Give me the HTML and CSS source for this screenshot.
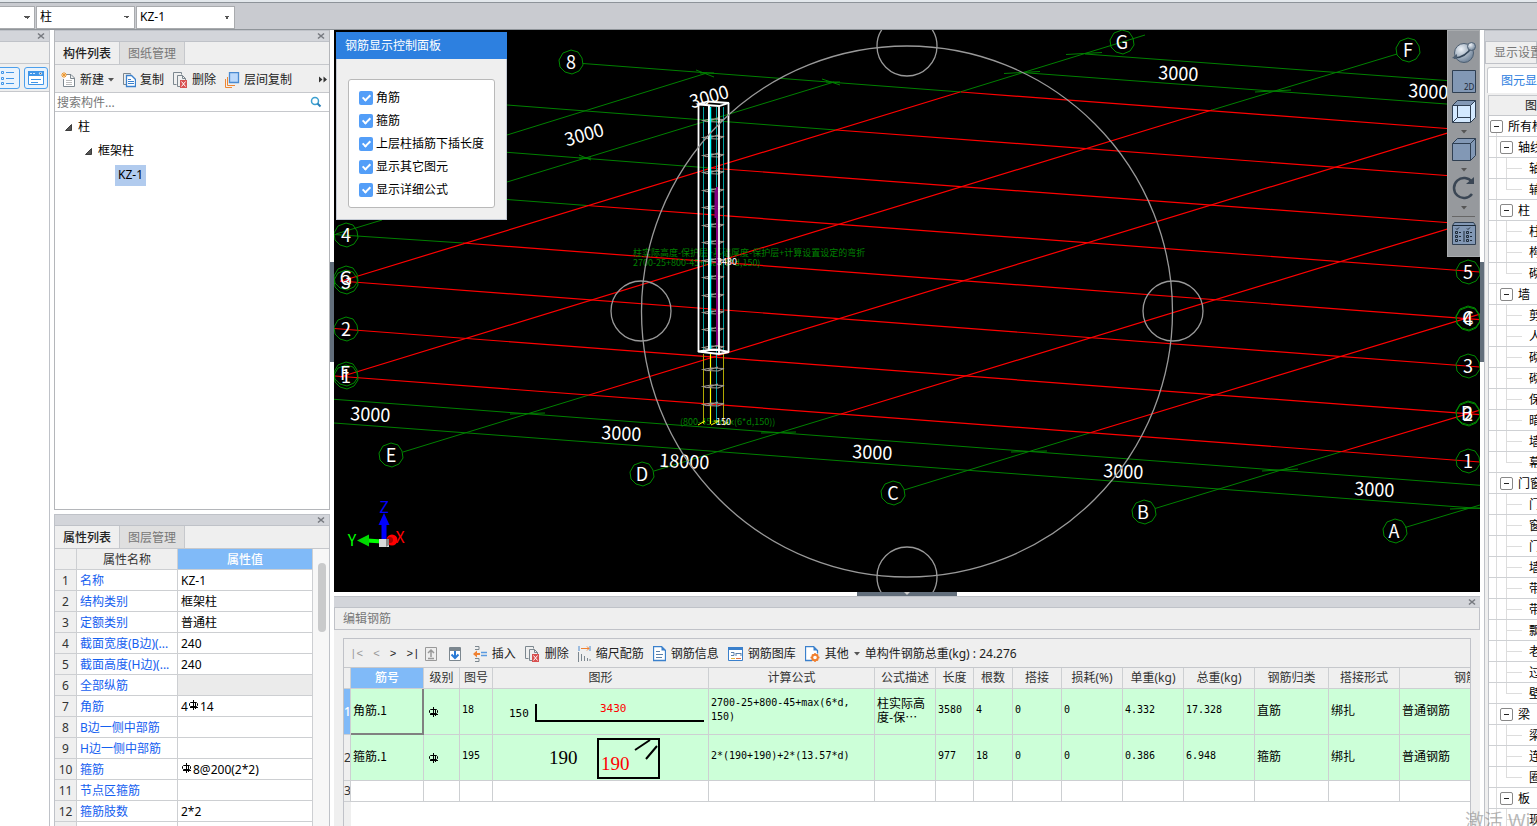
FILE: index.html
```html
<!DOCTYPE html>
<html lang="zh-CN">
<head>
<meta charset="utf-8">
<title>钢筋三维</title>
<link rel="stylesheet" href="styles.css">
</head>
<body>
<svg class="defs" aria-hidden="true">
  <symbol id="close" viewBox="0 0 8 8"><path d="M1 1.5l6 5M7 1.5l-6 5" stroke="#777a80" stroke-width="1.6" fill="none"/></symbol>
  <symbol id="down" viewBox="0 0 6 4"><path d="M0 0h6l-3 3.5z" fill="#555"/></symbol>
  <symbol id="rebar" viewBox="0 0 10 10"><path d="M1.500 2.500h6l1 1v2l-1 1h-6l-1-1v-2zM4.500 0v10M6.500 2v7M1 7.500h8" fill="none" stroke="#000"/></symbol>
  <symbol id="open" viewBox="0 0 7 7"><path d="M6.500 .5v6h-6z" fill="#555" stroke="#222" stroke-width=".8"/></symbol>
  <symbol id="del" viewBox="0 0 15 16"><path d="M3.500 12.500h-3v-12h8v2M7 14.500H4.500v-11h5l3 3v2M9.500 3.500v3h3" fill="none" stroke="#7c878f"/><path d="M7 8h7v8H7z" fill="#d85050"/><path d="M8.500 9.500l4 5M12.500 9.500l-4 5" stroke="#fff"/></symbol>
  <symbol id="bub" viewBox="-13 -13 26 26"><path d="M0-12L7-10 11-4 12 3 8 9 1 12-6 10-11 5-12-2-8-9z" fill="none" stroke="#008a00"/></symbol>
</svg>

<header class="topbar">
  <select class="combo combo-first" aria-label="楼层"><option></option></select>
  <select class="combo" aria-label="构件类别"><option>柱</option></select>
  <select class="combo" aria-label="构件"><option>KZ-1</option></select>
</header>

<main class="work">
  <aside class="nav">
    <div class="strip"><button class="x" aria-label="关闭"><svg width="8" height="8"><use href="#close"/></svg></button></div>
    <div class="nav-blank"></div>
    <div class="nav-tools">
      <button class="tile" aria-label="列表"><svg width="22" height="20" viewBox="0 0 22 20"><g fill="none" stroke="#3f95e8"><path d="M4.500 3.500h2v2h-2zM4.500 9.500h2v2h-2zM4.500 14.500h2v2h-2zM9 4.500h8M9 10.500h8M9 15.500h8"/></g></svg></button>
      <button class="tile" aria-label="窗口"><svg width="22" height="20" viewBox="0 0 22 20"><path d="M3.500 3.500h15v13h-15z" fill="#fff" stroke="#3f95e8"/><path d="M3 3h16v5H3z" fill="#3f95e8"/><path d="M5 5.500h2M8 5.500h2M14 5h3l-1.500 2z" stroke="#fff" stroke-width=".8"/><path d="M6 11.500h10M6 14.500h7" stroke="#3f95e8"/></svg></button>
    </div>
  </aside>

  <div class="side">
    <section class="dock list-dock">
      <div class="strip"><button class="x" aria-label="关闭"><svg width="8" height="8"><use href="#close"/></svg></button></div>
      <div class="tabs"><button class="tab on">构件列表</button><button class="tab">图纸管理</button></div>
      <div class="tools">
        <button><svg width="15" height="16" viewBox="0 0 15 16"><path d="M5 2.500h5l3.500 3.500v8.500h-11V7M9.500 2.500v4h4" fill="#fff" stroke="#7c878f"/><path d="M5 8.500h6M5 10.500h6M5 12.500h6" stroke="#bbb"/><path d="M0 3h6M3 0v6M1 1l4 4M5 1L1 5" stroke="#f0982c"/></svg>新建<svg class="arr" width="6" height="4"><use href="#down"/></svg></button>
        <button><svg width="13" height="16" viewBox="0 0 13 16"><path d="M3 12.500H.5V1.500h7v1" fill="none" stroke="#7c878f"/><path d="M3.500 3.500h5l4 4v7h-9z" fill="#fff" stroke="#3a80cc" stroke-width="1.300"/><path d="M5 7.500h3M5 9.500h6M5 11.500h6" stroke="#3a80cc"/></svg>复制</button>
        <button><svg width="15" height="16"><use href="#del"/></svg>删除</button>
        <button><svg width="15" height="16" viewBox="0 0 15 16"><path d="M.5 7v8.500H7M2.500 5v8.500H10" fill="none" stroke="#ed8734"/><path d="M4.500.5h9v10h-9z" fill="#bcd9fb" stroke="#4a8ad0" stroke-width="1.300"/></svg>层间复制</button>
        <button class="more" aria-label="更多"><svg width="8" height="7" viewBox="0 0 8 7"><path d="M0 .5l3.500 3L0 6.500zM4.500.5L8 3.500l-3.500 3z" fill="#333"/></svg></button>
      </div>
      <label class="search"><input type="text" placeholder="搜索构件..." aria-label="搜索构件"><svg width="12" height="12" viewBox="0 0 12 12"><circle cx="5" cy="5" r="3.500" fill="#fff" stroke="#3b9fd0" stroke-width="1.500"/><path d="M7.500 7.500l3 3" stroke="#2a7fb8" stroke-width="2"/></svg></label>
      <ul class="tree">
        <li><svg width="7" height="7"><use href="#open"/></svg>柱</li>
        <li class="lv2"><svg width="7" height="7"><use href="#open"/></svg>框架柱</li>
        <li class="lv3"><span class="picked">KZ-1</span></li>
      </ul>
    </section>

    <section class="dock prop-dock">
      <div class="strip"><button class="x" aria-label="关闭"><svg width="8" height="8"><use href="#close"/></svg></button></div>
      <div class="tabs"><button class="tab on">属性列表</button><button class="tab">图层管理</button></div>
      <div class="prop-body">
        <table class="props">
          <colgroup><col class="p0"><col class="p1"><col></colgroup>
          <tr><th></th><th>属性名称</th><th class="hot">属性值</th></tr>
          <tr><th>1</th><td>名称</td><td>KZ-1</td></tr>
          <tr><th>2</th><td>结构类别</td><td>框架柱</td></tr>
          <tr><th>3</th><td>定额类别</td><td>普通柱</td></tr>
          <tr><th>4</th><td>截面宽度(B边)(...</td><td>240</td></tr>
          <tr><th>5</th><td>截面高度(H边)(...</td><td>240</td></tr>
          <tr><th>6</th><td>全部纵筋</td><td class="off"></td></tr>
          <tr><th>7</th><td>角筋</td><td>4<svg class="rb" width="12" height="10"><use href="#rebar"/></svg>14</td></tr>
          <tr><th>8</th><td>B边一侧中部筋</td><td></td></tr>
          <tr><th>9</th><td>H边一侧中部筋</td><td></td></tr>
          <tr><th>10</th><td>箍筋</td><td><svg class="rb" width="12" height="10"><use href="#rebar"/></svg>8@200(2*2)</td></tr>
          <tr><th>11</th><td>节点区箍筋</td><td></td></tr>
          <tr><th>12</th><td>箍筋肢数</td><td>2*2</td></tr>
          <tr><th></th><td></td><td></td></tr>
        </table>
        <div class="scroll"><div class="thumb"></div></div>
      </div>
    </section>
  </div>

  <div class="splitter v"></div>

  <div class="center">
    <section class="view">
      <svg class="scene" viewBox="334 30 1146 562" preserveAspectRatio="xMinYMin slice">
        <g fill="none" stroke="#008000">
          <path d="M334 234.500L463 243M507 199.500L587 205.500M507 152.300L710 168M507 105L836 130M583 63.500L961 92M1022 72.500L1480 106.500M1085 54L1480 83M334 399.300L1480 485.300M334 423L1480 508.500"/>
          <path d="M403 452L589 395M654 471L841 414M904 490L1091 432.500M1155 508.500L1342 451.500M1405 527.500L1480 505M336 234L382 220M507 182L834 82M507 135L707 73M960 92L1145 35M1212 110L1397 54"/>
          <path d="M510 414l35-1M761 433l35-1M1011 452l36-1M1262 471l36-2M1450 509l30-1M1004 73.500l36-2M1066 54.500l36-2M1255 92l36-2M696 70l18 7M700 73h14M822 79l18 6M826 82h14M579 155l12 5M579 158h12"/>
        </g>
        <g fill="none" stroke="#f00" stroke-width="1.200">
          <path d="M335 376L1480 462M334 328.500L1480 414.700M340 281L1480 367M463 243L1480 319.700M587 205.500L1480 272M710 168L1480 225M836 130L1480 178M961 92L1480 131"/>
          <path d="M340 377L1212 110M340 281.500L960 92M589 395L1480 123M841 414L1480 219M1091 432.500L1480 314M1342 451.500L1480 410"/>
        </g>
        <g class="ax">
          <use href="#bub" x="558" y="49" width="26" height="26"/><text x="571" y="69">8</text>
          <use href="#bub" x="1109" y="29" width="26" height="26"/><text x="1122" y="49">G</text>
          <use href="#bub" x="1395" y="37" width="26" height="26"/><text x="1408" y="57">F</text>
          <use href="#bub" x="333" y="222" width="26" height="26"/><text x="346" y="242">4</text>
          <use href="#bub" x="333" y="265" width="26" height="26"/><use href="#bub" x="333" y="269" width="26" height="26"/><text x="346" y="285">G</text><text x="346" y="289">3</text>
          <use href="#bub" x="333" y="316" width="26" height="26"/><text x="346" y="336">2</text>
          <use href="#bub" x="333" y="361" width="26" height="26"/><use href="#bub" x="333" y="364" width="26" height="26"/><text x="345" y="380">F</text><text x="346" y="383">1</text>
          <use href="#bub" x="378" y="442" width="26" height="26"/><text x="391" y="462">E</text>
          <use href="#bub" x="629" y="461" width="26" height="26"/><text x="642" y="481">D</text>
          <use href="#bub" x="880" y="480" width="26" height="26"/><text x="893" y="500">C</text>
          <use href="#bub" x="1131" y="499" width="26" height="26"/><text x="1143" y="519">B</text>
          <use href="#bub" x="1382" y="518" width="26" height="26"/><text x="1394" y="538">A</text>
          <use href="#bub" x="1455" y="259" width="26" height="26"/><text x="1468" y="279">5</text>
          <use href="#bub" x="1455" y="305" width="26" height="26"/><use href="#bub" x="1455" y="306" width="26" height="26"/><text x="1468" y="325">C</text><text x="1468" y="326">4</text>
          <use href="#bub" x="1455" y="353" width="26" height="26"/><text x="1468" y="373">3</text>
          <use href="#bub" x="1455" y="400" width="26" height="26"/><use href="#bub" x="1455" y="401" width="26" height="26"/><text x="1467" y="420">B</text><text x="1468" y="421">2</text>
          <use href="#bub" x="1455" y="448" width="26" height="26"/><text x="1468" y="468">1</text>
        </g>
        <g class="dim">
          <text transform="translate(370 421) rotate(3)">3000</text>
          <text transform="translate(621 440) rotate(3)">3000</text>
          <text transform="translate(872 459) rotate(3)">3000</text>
          <text transform="translate(1123 478) rotate(3)">3000</text>
          <text transform="translate(1374 496) rotate(3)">3000</text>
          <text transform="translate(684 468) rotate(3)">18000</text>
          <text transform="translate(1178 80) rotate(3)">3000</text>
          <text transform="translate(1428 98) rotate(3)">3000</text>
          <text transform="translate(586 141) rotate(-16)">3000</text>
          <text transform="translate(711 103) rotate(-16)">3000</text>
        </g>
        <g class="note">
          <text x="633" y="256">柱实际高度-保护层+基础厚度-保护层+计算设置设定的弯折</text>
          <text x="633" y="266">2700-25+800-45+max(6*d,150)</text>
          <text x="680" y="425">(800-45+max(6*d,150))</text>
        </g>
        <path d="M703.500 107V350M723.500 107V350M716.500 107V424" stroke="#00a5a5" fill="none"/>
        <path d="M703.500 354V424M723.500 354V424" stroke="#b0a800" fill="none"/>
        <path d="M710.500 354V424" stroke="#ff0" stroke-width="1.200"/>
        <path d="M698 425l7-4M711 425l8-4h-5M724 425l4-3" stroke="#ff0" fill="none"/>
        <g fill="none" stroke="#a09a90" stroke-width="1.200">
          <path id="tie" d="M703 120.500l8-1.500 13 .5-6 2.500-12-.5zM706 122l12-4"/>
          <use href="#tie" y="17"/><use href="#tie" y="35"/><use href="#tie" y="52"/><use href="#tie" y="70"/><use href="#tie" y="87"/><use href="#tie" y="105"/><use href="#tie" y="122"/><use href="#tie" y="140"/><use href="#tie" y="157"/><use href="#tie" y="175"/><use href="#tie" y="192"/><use href="#tie" y="209"/><use href="#tie" y="227"/><use href="#tie" y="249"/><use href="#tie" y="266"/><use href="#tie" y="284"/>
        </g>
        <path d="M709 105V350" stroke="#fff" stroke-width="2"/>
        <path d="M710.500 107V350" stroke="#0ff" stroke-width="1.500"/>
        <path d="M717 187V345M715.500 190v28" stroke="#800080" stroke-width="2"/>
        <path d="M698.500 104V352M728.500 103V352M719 106V353" stroke="#fff" stroke-width="1.800"/>
        <path d="M698 104l10-2.500 21 1.500-10 3-20-1.500zM698 351.500l21 2.500 10-2-10-2h-10z" fill="none" stroke="#fff" stroke-width="1.800"/>
        <g class="val"><text x="717" y="265">3430</text><text x="716" y="425">150</text></g>
        <g fill="none" stroke="#999" stroke-width="1.300">
          <circle cx="907" cy="311.500" r="265.500"/><circle cx="907" cy="46" r="30"/><circle cx="907" cy="577" r="30"/><circle cx="641" cy="311" r="30"/><circle cx="1173" cy="311" r="30"/>
        </g>
        <path d="M384 539v-15" stroke="#00f" stroke-width="5"/><path d="M384 513l5.500 12h-11z" fill="#00f"/>
        <path d="M382 541.500l-15-1" stroke="#0f0" stroke-width="4"/><path d="M357 540.500l12-6v12z" fill="#00d800"/>
        <circle cx="392" cy="540" r="5.500" fill="#f00"/><circle cx="390" cy="540" r="3" fill="#a00"/>
        <path d="M379 539h10v8h-10z" fill="#d8d8d8"/><path d="M386 539h3v6l-3 2z" fill="#888"/>
        <g class="xyz"><text x="384" y="513" fill="#00f">Z</text><text x="352" y="546" fill="#0f0">Y</text><text x="400" y="543" fill="#f00">X</text></g>
      </svg>

      <div class="panel">
        <h2>钢筋显示控制面板</h2>
        <div class="checks">
          <label><input type="checkbox" checked>角筋</label>
          <label><input type="checkbox" checked>箍筋</label>
          <label><input type="checkbox" checked>上层柱插筋下插长度</label>
          <label><input type="checkbox" checked>显示其它图元</label>
          <label><input type="checkbox" checked>显示详细公式</label>
        </div>
      </div>

      <div class="viewbar">
        <button aria-label="动态观察"><svg width="26" height="24" viewBox="0 0 26 24"><defs><radialGradient id="ball" cx=".35" cy=".3" r=".8"><stop offset="0" stop-color="#eef3f8"/><stop offset="1" stop-color="#63788f"/></radialGradient></defs><circle cx="13" cy="13" r="9.500" fill="url(#ball)" stroke="#4d5f72"/><path d="M3 18Q14 18 21 7" fill="none" stroke="#35475a" stroke-width="1.500"/><circle cx="20.500" cy="6.500" r="4" fill="url(#ball)" stroke="#4d5f72"/><path d="M1 18l5-4v5z" fill="#4d5f72"/></svg></button>
        <button aria-label="二维"><svg width="24" height="24" viewBox="0 0 24 24"><path d="M.5.500h23v22H.5z" fill="#8298b5" stroke="#2f3f52"/><text x="12" y="20" font-size="8" fill="#1d2a38">2D</text></svg></button>
        <button aria-label="线框"><svg width="24" height="24" viewBox="0 0 24 24"><path d="M.5 5.500h18v17H.5z" fill="#d3e9ff"/><path d="M.5 5.500l5-5h18l-5 5z" fill="#8298b5"/><path d="M18.500 5.500l5-5v17l-5 5z" fill="#d3e9ff"/><path d="M.5 5.500h18v17H.5zM.5 5.500l5-5h18l-5 5M23.500.5v17l-5 5M5.500 5.500v12h13M5.500 17.500l-5 5" fill="none" stroke="#2f3f52"/></svg></button>
        <svg class="dd" width="6" height="4"><use href="#down"/></svg>
        <button aria-label="实体"><svg width="24" height="24" viewBox="0 0 24 24"><path d="M.5 5.500l5-5h18v17l-5 5H.5z" fill="#8298b5" stroke="#2f3f52"/><path d="M.5 5.500h18v17M18.500 5.500l5-5" fill="none" stroke="#2f3f52"/></svg></button>
        <svg class="dd" width="6" height="4"><use href="#down"/></svg>
        <button aria-label="旋转"><svg width="24" height="24" viewBox="0 0 24 24"><path d="M20 18a10 10 0 1 1 0-12" fill="none" stroke="#3a4654" stroke-width="2.500"/><path d="M22 1v7h-8z" fill="#3a4654"/></svg></button>
        <svg class="dd" width="6" height="4"><use href="#down"/></svg>
        <hr>
        <button aria-label="显示面板"><svg width="24" height="24" viewBox="0 0 24 24"><path d="M.5 3.500l2-3h19l2 3v19H.5z" fill="#8298b5" stroke="#2f3f52"/><path d="M.5 3.500h23M12 9v11M4 6.500l1 1 2-2M15 6.500l1 1 2-2M3.500 9.500h2v2h-2zM3.500 13.500h2v2h-2zM3.500 17.500h2v2h-2zM14.500 9.500h2v2h-2zM14.500 13.500h2v2h-2zM14.500 17.500h2v2h-2zM7 10.500h2M7 14.500h2M7 18.500h2M18 10.500h2M18 14.500h2M18 18.500h2" fill="none" stroke="#1d2a38"/></svg></button>
      </div>
    </section>

    <div class="splitter h"><span><svg width="6" height="4" viewBox="0 0 6 4"><path d="M0 0h6l-3 3z" fill="#ccc"/></svg></span></div>

    <section class="dock edit">
      <div class="strip"><button class="x" aria-label="关闭"><svg width="8" height="8"><use href="#close"/></svg></button></div>
      <h2 class="edit-title">编辑钢筋</h2>
      <div class="frame">
        <div class="edit-tools">
          <div class="steps"><button disabled>|&lt;</button><button disabled>&lt;</button><button>&gt;</button><button>&gt;|</button></div>
          <button aria-label="上移"><svg width="12" height="14" viewBox="0 0 12 14"><path d="M.5.500h11v13H.5z" fill="#eee" stroke="#999"/><path d="M6 10V3M3 6l3-3 3 3M3 11.500h6" fill="none" stroke="#999" stroke-width="1.500"/></svg></button>
          <button class="godown" aria-label="下移"><svg width="12" height="14" viewBox="0 0 12 14"><path d="M.5.500h11v13H.5z" fill="#fff" stroke="#7c878f"/><path d="M0 1h12v3H0z" fill="#7c878f"/><path d="M6 4v7M2.500 7.500L6 11l3.500-3.500" fill="none" stroke="#2b7bd6" stroke-width="2"/></svg></button>
          <button><svg width="14" height="16" viewBox="0 0 14 16"><path d="M2 .5h4v3H2M2 15.500h4v-3H2" fill="none" stroke="#7c878f"/><path d="M0 8l4-3.500v2.500h3v2H4v2.500z" fill="#f08030"/><path d="M8 6.500h6M8 9.500h6" stroke="#5a9ae0" stroke-width="1.500"/></svg>插入</button>
          <button><svg width="15" height="16"><use href="#del"/></svg>删除</button>
          <button><svg width="13" height="16" viewBox="0 0 13 16"><path d="M1 0v5M12 0v5" stroke="#4a8ad0"/><path d="M3 2.500h8M9 .5l2 2-2 2" fill="none" stroke="#f08030"/><path d="M.5 6v10M3.500 8v7M6.500 10v5M9.500 12v3M12 13v2" stroke="#7c878f"/></svg>缩尺配筋</button>
          <button><svg width="13" height="16" viewBox="0 0 13 16"><path d="M.5.500h8l4 4v10H.5z" fill="#fff" stroke="#3a80cc" stroke-width="1.300"/><path d="M8.500.5v4h4z" fill="#3a80cc"/><path d="M3 5.500h4M3 8.500h7M3 11.500h6" stroke="#5a7fa8"/></svg>钢筋信息</button>
          <button><svg width="15" height="14" viewBox="0 0 15 14"><path d="M.5.500h14v13H.5z" fill="#fff" stroke="#3a80cc"/><path d="M0 0h15v3H0z" fill="#3a80cc"/><path d="M3 5.500h3v3H3M8 6.500h5M8 6v3M13 6v3" fill="none" stroke="#5a7fa8"/><path d="M3 11.500h4" stroke="#e5b53a"/><path d="M8 11.500h5" stroke="#e07048"/></svg>钢筋图库</button>
          <button><svg width="15" height="16" viewBox="0 0 15 16"><path d="M7 14.500H.5V.5h8l4 4v3" fill="#fff" stroke="#3a80cc" stroke-width="1.300"/><path d="M8.500.5v4h4z" fill="#3a80cc"/><circle cx="10" cy="11.500" r="2.800" fill="#fff" stroke="#f08030" stroke-width="2"/><path d="M10 7v2M10 14v2M5.500 11.500h2M12.500 11.500h2M7 8.500l1 1M13 8.500l-1 1M7 14.500l1-1M13 14.500l-1-1" stroke="#f08030" stroke-width="1.500"/></svg>其他<svg class="arr" width="6" height="4"><use href="#down"/></svg></button>
          <span class="total">单构件钢筋总重(kg) : 24.276</span>
        </div>
        <div class="grid-wrap">
          <table class="bars">
            <colgroup><col class="w7"><col class="w73"><col class="w36"><col class="w33"><col class="w216"><col class="w166"><col class="w61"><col class="w38"><col class="w39"><col class="w49"><col class="w61"><col class="w61"><col class="w71"><col class="w74"><col class="w71"><col class="w157"></colgroup>
            <tr><th></th><th class="hot">筋号</th><th>级别</th><th>图号</th><th>图形</th><th>计算公式</th><th>公式描述</th><th>长度</th><th>根数</th><th>搭接</th><th>损耗(%)</th><th>单重(kg)</th><th>总重(kg)</th><th>钢筋归类</th><th>搭接形式</th><th>钢筋类型</th></tr>
            <tr class="row"><th class="hot">1</th><td class="zh cur">角筋.1</td><td class="sym"><svg width="10" height="10"><use href="#rebar"/></svg></td><td>18</td>
              <td class="fig"><svg width="215" height="45" viewBox="0 0 215 45"><path d="M43 15v17h168" fill="none" stroke="#000" stroke-width="2"/><text x="16" y="28">150</text><text x="107" y="23" class="red">3430</text></svg></td>
              <td>2700-25+800-45+max(6*d,<br>150)</td><td class="zh">柱实际高<br>度-保⋯</td><td>3580</td><td>4</td><td>0</td><td>0</td><td>4.332</td><td>17.328</td><td class="zh">直筋</td><td class="zh">绑扎</td><td class="zh">普通钢筋</td></tr>
            <tr class="row"><th>2</th><td class="zh">箍筋.1</td><td class="sym"><svg width="10" height="10"><use href="#rebar"/></svg></td><td>195</td>
              <td class="fig"><svg width="215" height="45" viewBox="0 0 215 45"><path d="M105 4h61v39h-61z" fill="none" stroke="#000" stroke-width="2"/><path d="M142 15l15-10M153 24l11-13" stroke="#000" stroke-width="2"/><text x="56" y="29" class="big">190</text><text x="108" y="35" class="big red">190</text></svg></td>
              <td>2*(190+190)+2*(13.57*d)</td><td></td><td>977</td><td>18</td><td>0</td><td>0</td><td>0.386</td><td>6.948</td><td class="zh">箍筋</td><td class="zh">绑扎</td><td class="zh">普通钢筋</td></tr>
            <tr><th>3</th><td></td><td></td><td></td><td></td><td></td><td></td><td></td><td></td><td></td><td></td><td></td><td></td><td></td><td></td><td></td></tr>
          </table>
        </div>
      </div>
    </section>
  </div>

  <div class="splitter v"></div>

  <aside class="dock display">
    <div class="strip"></div>
    <h2 class="edit-title">显示设置</h2>
    <div class="disp-tabs"><button>图元显示</button></div>
    <div class="disp-head">图层</div>
    <ul class="layers">
      <li class="root"><button class="box" aria-label="收起"></button>所有构件</li>
      <li class="grp"><button class="box" aria-label="收起"></button>轴线</li><li>轴网</li><li class="end">辅助轴线</li>
      <li class="grp"><button class="box" aria-label="收起"></button>柱</li><li>柱</li><li>构造柱</li><li class="end">砌体柱</li>
      <li class="grp"><button class="box" aria-label="收起"></button>墙</li><li>剪力墙</li><li>人防门框墙</li><li>砌体墙</li><li>砌体加筋</li><li>保温墙</li><li>暗梁</li><li>墙垛</li><li class="end">幕墙</li>
      <li class="grp"><button class="box" aria-label="收起"></button>门窗洞</li><li>门</li><li>窗</li><li>门联窗</li><li>墙洞</li><li>带形窗</li><li>带形洞</li><li>飘窗</li><li>老虎窗</li><li>过梁</li><li class="end">壁龛</li>
      <li class="grp"><button class="box" aria-label="收起"></button>梁</li><li>梁</li><li>连梁</li><li class="end">圈梁</li>
      <li class="grp"><button class="box" aria-label="收起"></button>板</li><li>现浇板</li>
    </ul>
  </aside>
</main>
<div class="watermark">激活 Windows</div>
</body>
</html>
```
FILE: styles.css
```css
* { box-sizing: border-box; }
body {
  margin: 0;
  height: 100vh;
  display: flex;
  flex-direction: column;
  overflow: hidden;
  background: #fff;
  color: #222;
  font: 12px/16px "Noto Sans", "Noto Sans CJK SC", sans-serif;
}
button, input, select { font: inherit; color: inherit; }
button { border: 0; background: none; padding: 0; }
h2 { margin: 0; font-size: 12px; font-weight: 400; }
ul { margin: 0; padding: 0; list-style: none; }
svg { flex: none; }
.defs { position: absolute; width: 0; height: 0; }

.topbar {
  flex: none;
  height: 30px;
  display: flex;
  align-items: center;
  gap: 1px;
  padding-top: 3px;
  background: #c9cbd0;
  border-top: 2px solid #e3e8ec;
  border-bottom: 1px solid #90959a;
  box-shadow: inset 0 1px #8d9399;
}
.combo {
  appearance: none;
  width: 99px;
  height: 23px;
  padding: 0 3px;
  border: 1px solid #a9abae;
  border-radius: 0;
  color: #000;
  background-color: #fff;
  background-image: linear-gradient(to top right, transparent 50%, #555 50%), linear-gradient(to top left, transparent 50%, #555 50%);
  background-position: right 7px top 9px, right 4px top 9px;
  background-size: 3px 3px;
  background-repeat: no-repeat;
}
.combo-first { width: 35px; border-left: 0; }

.work { flex: 1; min-height: 0; display: flex; }
.strip {
  flex: none;
  height: 12px;
  display: flex;
  justify-content: flex-end;
  align-items: center;
  padding-right: 4px;
  background: #d3d5da;
  border-top: 1px solid #bfc2c8;
  border-bottom: 1px solid #bfc2c8;
}
.x { display: flex; }
.nav { flex: 0 0 50px; min-width: 0; overflow: hidden; border-right: 1px solid #bfc2c8; margin-right: 4px; }
.nav-blank { height: 22px; background: #efefef; border-bottom: 1px solid #c6c8cc; }
.nav-tools {
  height: 28px;
  display: flex;
  justify-content: flex-end;
  align-items: center;
  gap: 4px;
  padding-right: 1px;
  background: #efefef;
  border-bottom: 1px solid #c6c8cc;
}
.tile {
  flex: none;
  width: 24px;
  height: 22px;
  display: flex;
  align-items: center;
  justify-content: center;
  border: 1px solid #4c9fec;
  border-radius: 3px;
  background: #e9f3fd;
}

.side { flex: 0 0 276px; display: flex; flex-direction: column; gap: 4px; }
.dock { display: flex; flex-direction: column; background: #efefef; }
.list-dock { flex: 0 0 480px; border: 1px solid #b4b6ba; border-top: 0; }
.prop-dock { flex: 1; min-height: 0; border: solid #bfc2c8; border-width: 0 1px; }
.tabs { flex: none; height: 23px; display: flex; border-bottom: 1px solid #c6c8cc; }
.tab {
  width: 65px;
  padding-top: 2px;
  color: #777;
  background: #dfdfdf;
  border-right: 1px solid #c6c8cc;
}
.tab.on { color: #222; background: #efefef; font-weight: 500; }
.tools { flex: none; height: 28px; display: flex; align-items: center; gap: 9px; padding: 2px 2px 0 6px; border-bottom: 1px solid #c6c8cc; }
.tools button, .edit-tools > button { display: flex; align-items: center; gap: 4px; white-space: nowrap; }
.edit-tools > button { gap: 5px; }
.tools .more { margin-left: auto; }
.search { flex: none; height: 19px; display: flex; align-items: center; padding: 0 7px 0 2px; background: #fff; border-bottom: 1px solid #c6c8cc; }
.search input { flex: 1; min-width: 0; height: 17px; padding: 0; border: 0; outline: 0; }
.search input::placeholder { color: #777; opacity: 1; }
.tree { flex: 1; padding: 3px 10px; background: #fff; color: #000; }
.tree li { height: 24px; display: flex; align-items: center; gap: 6px; }
.tree .lv2 { padding-left: 20px; }
.tree .lv3 { padding-left: 50px; }
.picked { padding: 2px 3px; height: 21px; background: #b1cbee; }

.prop-body { flex: 1; min-height: 0; display: flex; overflow: hidden; background: #fff; }
table { border-collapse: separate; border-spacing: 0; table-layout: fixed; }
th, td { padding: 2px 3px 0; font-weight: 400; white-space: nowrap; overflow: hidden; border: solid #cdcfd2; border-width: 0 1px 1px 0; }
th { padding: 2px 0 0; background: #efefef; color: #333; text-align: center; }
td { text-align: left; color: #000; }
.props { flex: 1; width: 0; height: 294px; }
.props tr { height: 21px; }
.props td:nth-child(2) { color: #1560f0; }
.p0 { width: 22px; }
.p1 { width: 101px; }
.hot, .props .hot { background: #80baf8; color: #fff; font-weight: 500; }
.off { background: #ebebeb; }
.rb { vertical-align: 1px; }
.scroll { flex: 0 0 16px; padding: 14px 3px 0 5px; background: #f7f7f7; }
.thumb { height: 69px; border-radius: 4px; background: #c9cacb; }

.splitter.v { flex: 0 0 4px; background: linear-gradient(#626e7b, #626e7b) no-repeat 0 232px / 4px 100px, #fff; }
.splitter.h { flex: 0 0 4px; display: flex; justify-content: center; }
.splitter.h span { width: 100px; display: flex; justify-content: center; background: #626e7b; }

.center { flex: 1; min-width: 0; display: flex; flex-direction: column; }
.view { flex: 1; min-height: 0; position: relative; overflow: hidden; background: #000; }
.scene { display: block; width: 100%; height: 100%; font-family: "Noto Sans CJK SC", sans-serif; }
.ax text { font-size: 18px; fill: #fff; text-anchor: middle; }
.dim text { font-size: 18px; fill: #fff; text-anchor: middle; }
.note text { font-size: 9px; fill: #008000; }
.val text { font-size: 9px; fill: #fff; }
.xyz text { font-size: 16px; text-anchor: middle; }

.panel { position: absolute; left: 2px; top: 2px; width: 171px; padding-bottom: 11px; background: #efefef; border: 1px solid #c3c9d3; border-top: 0; }
.panel h2 { margin: 0 -1px; padding: 6px 9px 5px; background: #2d80e0; color: #fff; }
.checks { margin: 20px 11px 0; padding: 6px 10px 6px; background: #fff; border: 1px solid #b9b9b9; border-radius: 3px; color: #000; }
.checks label { height: 23px; display: flex; align-items: center; gap: 3px; white-space: nowrap; }
.checks input {
  appearance: none;
  flex: none;
  width: 14px;
  height: 14px;
  margin: 0;
  display: flex;
  align-items: flex-start;
  justify-content: center;
  padding-top: 2px;
  border-radius: 2px;
  background: #539ef8;
}
.checks input:checked::after { content: ""; box-sizing: border-box; width: 5px; height: 8px; border: solid #fff; border-width: 0 2px 2px 0; transform: rotate(45deg); }

.viewbar { position: absolute; top: 0; right: 0; width: 33px; padding: 9px 0 10px; display: flex; flex-direction: column; align-items: center; gap: 6px; background: #96999d; border: 1px solid #a8abae; }
.viewbar button { display: flex; }
.viewbar button svg { display: block; }
.viewbar .dd { margin: 0 0 -2px; }
.viewbar hr { width: 23px; height: 1px; margin: 2px 0 -1px; border: 0; background: #666; }

.edit { flex: 0 0 230px; overflow: hidden; }
.edit-title { flex: none; height: 22px; padding: 3px 8px; color: #777; border: solid #c0c2c8; border-width: 0 1px 1px; white-space: nowrap; }
.frame { flex: 1; min-height: 0; display: flex; flex-direction: column; margin: 8px 9px 0; border: 1px solid #c0c2c8; border-bottom: 0; }
.edit-tools { flex: none; height: 29px; display: flex; align-items: center; gap: 9px; padding: 1px 6px 0; border-bottom: 1px solid #c6c8cc; white-space: nowrap; }
.steps { display: flex; gap: 10px; margin-right: -4px; font-family: "Liberation Mono", monospace; font-size: 11px; }
.steps button:disabled { color: #999; }
.godown { margin: 0 3px; }
.total { margin-left: -4px; }
.grid-wrap { flex: 1; overflow: hidden; background: linear-gradient(90deg, #efefef 7px, #fff 7px); }
.bars { width: 1213px; }
.bars tr { height: 21px; }
.bars th { padding-top: 0; }
.bars tr.row { height: 46px; background: #ccffd8; }
.bars td { padding: 0 2px; font: 10px/14px "DejaVu Sans Mono", monospace; }
.bars .row td { padding-bottom: 3px; }
.bars td.zh { font: 12px/14px "Noto Sans CJK SC", sans-serif; }
.bars .sym svg { display: block; margin: 3px 0 0 3px; }
.bars .row .fig { padding: 0; }
.fig svg { display: block; }
.fig text { font: 11px "DejaVu Sans Mono", monospace; }
.fig text.big { font: 19px "Liberation Serif", serif; }
.fig .red { fill: #f00; }
.bars td.cur { border: solid #808080; border-width: 0 2px 2px 0; }
.w7 { width: 7px; } .w73 { width: 73px; } .w36 { width: 36px; } .w33 { width: 33px; }
.w216 { width: 216px; } .w166 { width: 166px; } .w61 { width: 61px; } .w38 { width: 38px; }
.w39 { width: 39px; } .w49 { width: 49px; } .w71 { width: 71px; } .w74 { width: 74px; } .w157 { width: 157px; }

.display { flex: 0 0 53px; overflow: hidden; border-left: 1px solid #bfc2c8; white-space: nowrap; }
.disp-tabs { flex: none; height: 31px; padding: 3px 0 0 2px; }
.disp-tabs button { height: 26px; width: 76px; color: #2d80e0; background: #fff; border: 1px solid #c6c8cc; border-bottom: 0; border-radius: 3px 0 0; }
.disp-head { flex: none; height: 21px; margin-left: 3px; padding: 2px 0 0 36px; border: solid #c6c8cc; border-width: 1px 0 1px 1px; }
.layers { flex: 1; margin-left: 3px; border-left: 1px solid #bfc2c8; background: #fff linear-gradient(#ddd, #ddd) no-repeat 7px 10px / 1px 100%; color: #000; }
.layers li {
  height: 21px;
  display: flex;
  align-items: center;
  gap: 5px;
  padding: 1px 0 0 40px;
  border-bottom: 1px solid #cfd1d4;
  background: linear-gradient(#ddd, #ddd) no-repeat 17px 0 / 1px 100%, linear-gradient(#ddd, #ddd) no-repeat 17px 10px / 16px 1px;
}
.layers .end { background-size: 1px 10px, 16px 1px; }
.layers .root { padding-left: 1px; background: none; }
.layers .grp { padding-left: 11px; background: none; }
.box { flex: none; width: 13px; height: 13px; border: 1px solid #888; border-radius: 2px; background: #fff linear-gradient(#222, #222) no-repeat center / 5px 1px; }

.watermark { position: absolute; right: -48px; bottom: -9px; width: 120px; font-size: 19px; line-height: 28px; color: #8a8a8a99; white-space: nowrap; pointer-events: none; }
```
